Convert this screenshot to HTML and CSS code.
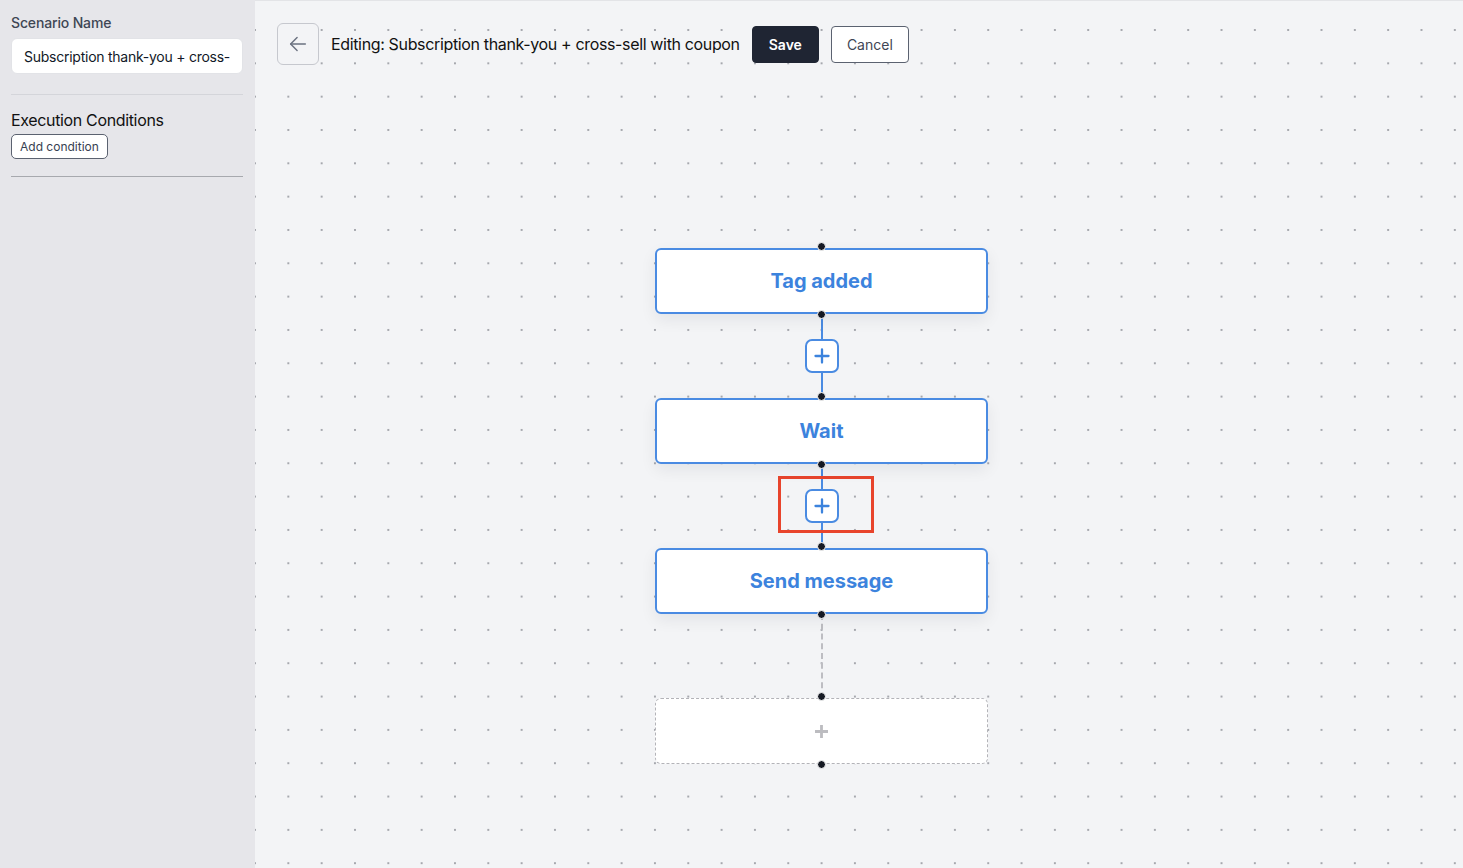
FILE: index.html
```html
<!DOCTYPE html>
<html lang="en">
<head>
    <meta charset="UTF-8">
    <meta name="viewport" content="width=device-width, initial-scale=1.0">
    <title>Scenario editor</title>
    <link rel="stylesheet" href="styles.css">
</head>
<body>
    <aside class="sidebar">
        <label class="field-label" for="scenarioName">Scenario Name</label>
        <input class="field-input" id="scenarioName" type="text" value="Subscription thank-you + cross-sell with coupon">
        <hr class="divider">
        <h3 class="section-title">Execution Conditions</h3>
        <button class="small-btn">Add condition</button>
        <hr class="divider divider-dark">
    </aside>

    <main class="canvas">
        <div class="toolbar">
            <button class="back-btn" aria-label="Back">
                <svg width="22" height="22" viewBox="0 0 24 24" fill="none" stroke="#6b7280" stroke-width="1.6" stroke-linecap="round" stroke-linejoin="round">
                    <path d="M20 12H4"/>
                    <path d="M11 5l-7 7 7 7"/>
                </svg>
            </button>
            <span class="editing-title">Editing: Subscription thank-you + cross-sell with coupon</span>
            <button class="btn btn-dark">Save</button>
            <button class="btn btn-light">Cancel</button>
        </div>

        <!-- flow diagram -->
        <div class="flow">
            <div class="node">Tag added</div>
            <div class="connector">
                <span class="line"></span>
                <button class="add-step" aria-label="Add step">
                    <svg width="16" height="16" viewBox="0 0 16 16" fill="none" stroke="currentColor" stroke-width="2.3" stroke-linecap="round"><path d="M8 1.5v13M1.5 8h13"/></svg>
                </button>
                <span class="line"></span>
            </div>
            <div class="node">Wait</div>
            <div class="connector">
                <span class="line"></span>
                <button class="add-step" aria-label="Add step">
                    <svg width="16" height="16" viewBox="0 0 16 16" fill="none" stroke="currentColor" stroke-width="2.3" stroke-linecap="round"><path d="M8 1.5v13M1.5 8h13"/></svg>
                </button>
                <span class="line"></span>
                <span class="highlight"></span>
            </div>
            <div class="node">Send message</div>
            <div class="connector connector-dashed"></div>
            <div class="node node-empty">
                <svg width="13" height="13" viewBox="0 0 12 12" fill="none" stroke="#bcbcc0" stroke-width="2.6"><path d="M6 0v12M0 6h12"/></svg>
            </div>
        </div>
    </main>
</body>
</html>
```

FILE: styles.css
```css
/* Layout general */
body {
    margin: 0;
    padding: 0;
    display: flex;
    height: 100vh;
    overflow: hidden;
    font-family: Inter, "Noto Sans", Arial, sans-serif;
    color: #111827;
}

/* Panel lateral */
.sidebar {
    width: 255px;
    flex-shrink: 0;
    box-sizing: border-box;
    padding: 14px 12px 0 11px;
    background-color: #e6e6ea;
    display: flex;
    flex-direction: column;
    align-items: flex-start;
}

.field-label {
    font-size: 14px;
    font-weight: 500;
    color: #3f4654;
    line-height: 17px;
    letter-spacing: -0.15px;
}

.field-input {
    margin-top: 7px;
    width: 100%;
    height: 36px;
    box-sizing: border-box;
    padding: 0 12px;
    font-family: inherit;
    font-size: 14px;
    letter-spacing: -0.25px;
    color: #111827;
    background-color: #fff;
    border: 1px solid #e2e3e7;
    border-radius: 6px;
    outline: none;
}

.divider {
    width: 100%;
    margin: 20px 0 0;
    border: none;
    border-top: 1px solid #d4d5da;
}

.divider-dark {
    margin-top: 17px;
    border-top-color: #a7a9ae;
}

.section-title {
    margin: 15px 0 4px;
    font-size: 16px;
    font-weight: 400;
    line-height: 20px;
    letter-spacing: -0.35px;
    color: #111;
}

.small-btn {
    height: 25px;
    padding: 0 8px;
    font-family: inherit;
    font-size: 12px;
    color: #374151;
    background-color: #fff;
    border: 1px solid #5b6270;
    border-radius: 5px;
    cursor: pointer;
}

/* Lienzo */
.canvas {
    flex: 1;
    position: relative;
    border-top: 1px solid #e3e4e7;
    background-color: #f3f4f6;
    background-image: radial-gradient(circle, #a6a8ae 0.8px, transparent 1.4px);
    background-size: 33.333px 33.333px;
    background-position: -16.667px 12.333px;
}

.toolbar {
    display: flex;
    align-items: center;
    padding: 22px 0 0 22px;
}

.back-btn {
    width: 42px;
    height: 42px;
    display: flex;
    align-items: center;
    justify-content: center;
    padding: 0;
    background-color: #f3f4f6;
    border: 1px solid #c6c8ce;
    border-radius: 6px;
    cursor: pointer;
}

.editing-title {
    margin: 0 12px 0 12px;
    font-size: 16px;
    letter-spacing: -0.35px;
    color: #111;
}

.btn {
    height: 37px;
    padding: 0 16px;
    font-family: inherit;
    font-size: 14px;
    border-radius: 4px;
    cursor: pointer;
}

.btn-dark {
    background-color: #1f2533;
    color: #fff;
    font-weight: 600;
    border: 1px solid #1f2533;
}

.btn-light {
    margin-left: 12px;
    padding: 0 15px;
    background-color: #fff;
    color: #3f4654;
    border: 1px solid #5b6270;
}

/* Diagrama */
.flow {
    position: absolute;
    left: 400px;
    top: 247px;
    width: 333px;
    display: flex;
    flex-direction: column;
    align-items: center;
}

.node {
    position: relative;
    z-index: 1;
    width: 100%;
    height: 66px;
    box-sizing: border-box;
    display: flex;
    align-items: center;
    justify-content: center;
    background-color: #fff;
    border: 2px solid #4a8be2;
    border-radius: 6px;
    box-shadow: 0 6px 16px rgba(17, 24, 39, 0.07);
    color: #3c83dd;
    font-size: 20px;
    font-weight: 700;
}

.node::before,
.node::after {
    content: "";
    position: absolute;
    left: 50%;
    width: 7px;
    height: 7px;
    margin-left: -4.5px;
    border-radius: 50%;
    background-color: #161a24;
    border: 1px solid #fff;
    box-sizing: content-box;
}

.node::before {
    top: -8px;
}

.node::after {
    bottom: -7px;
}

.node-empty {
    border: 1px dashed #b3b3b8;
    box-shadow: none;
}

.node-empty::before {
    top: -7px;
}

.node-empty::after {
    bottom: -6px;
}

.connector {
    position: relative;
    height: 84px;
    display: flex;
    flex-direction: column;
    align-items: center;
}

.connector .line {
    flex: 1;
    width: 2px;
    background-color: #4a8be2;
}

.connector-dashed {
    width: 0;
    border-left: 2px dashed #bdbdc2;
}

.add-step {
    width: 34px;
    height: 34px;
    display: flex;
    align-items: center;
    justify-content: center;
    padding: 0;
    color: #3c83dd;
    background-color: #fff;
    border: 2px solid #4a8be2;
    border-radius: 7px;
    cursor: pointer;
}

.highlight {
    position: absolute;
    left: -27px;
    top: 12px;
    width: 96px;
    height: 57px;
    box-sizing: border-box;
    border: 3px solid #e8442c;
    pointer-events: none;
}
```
